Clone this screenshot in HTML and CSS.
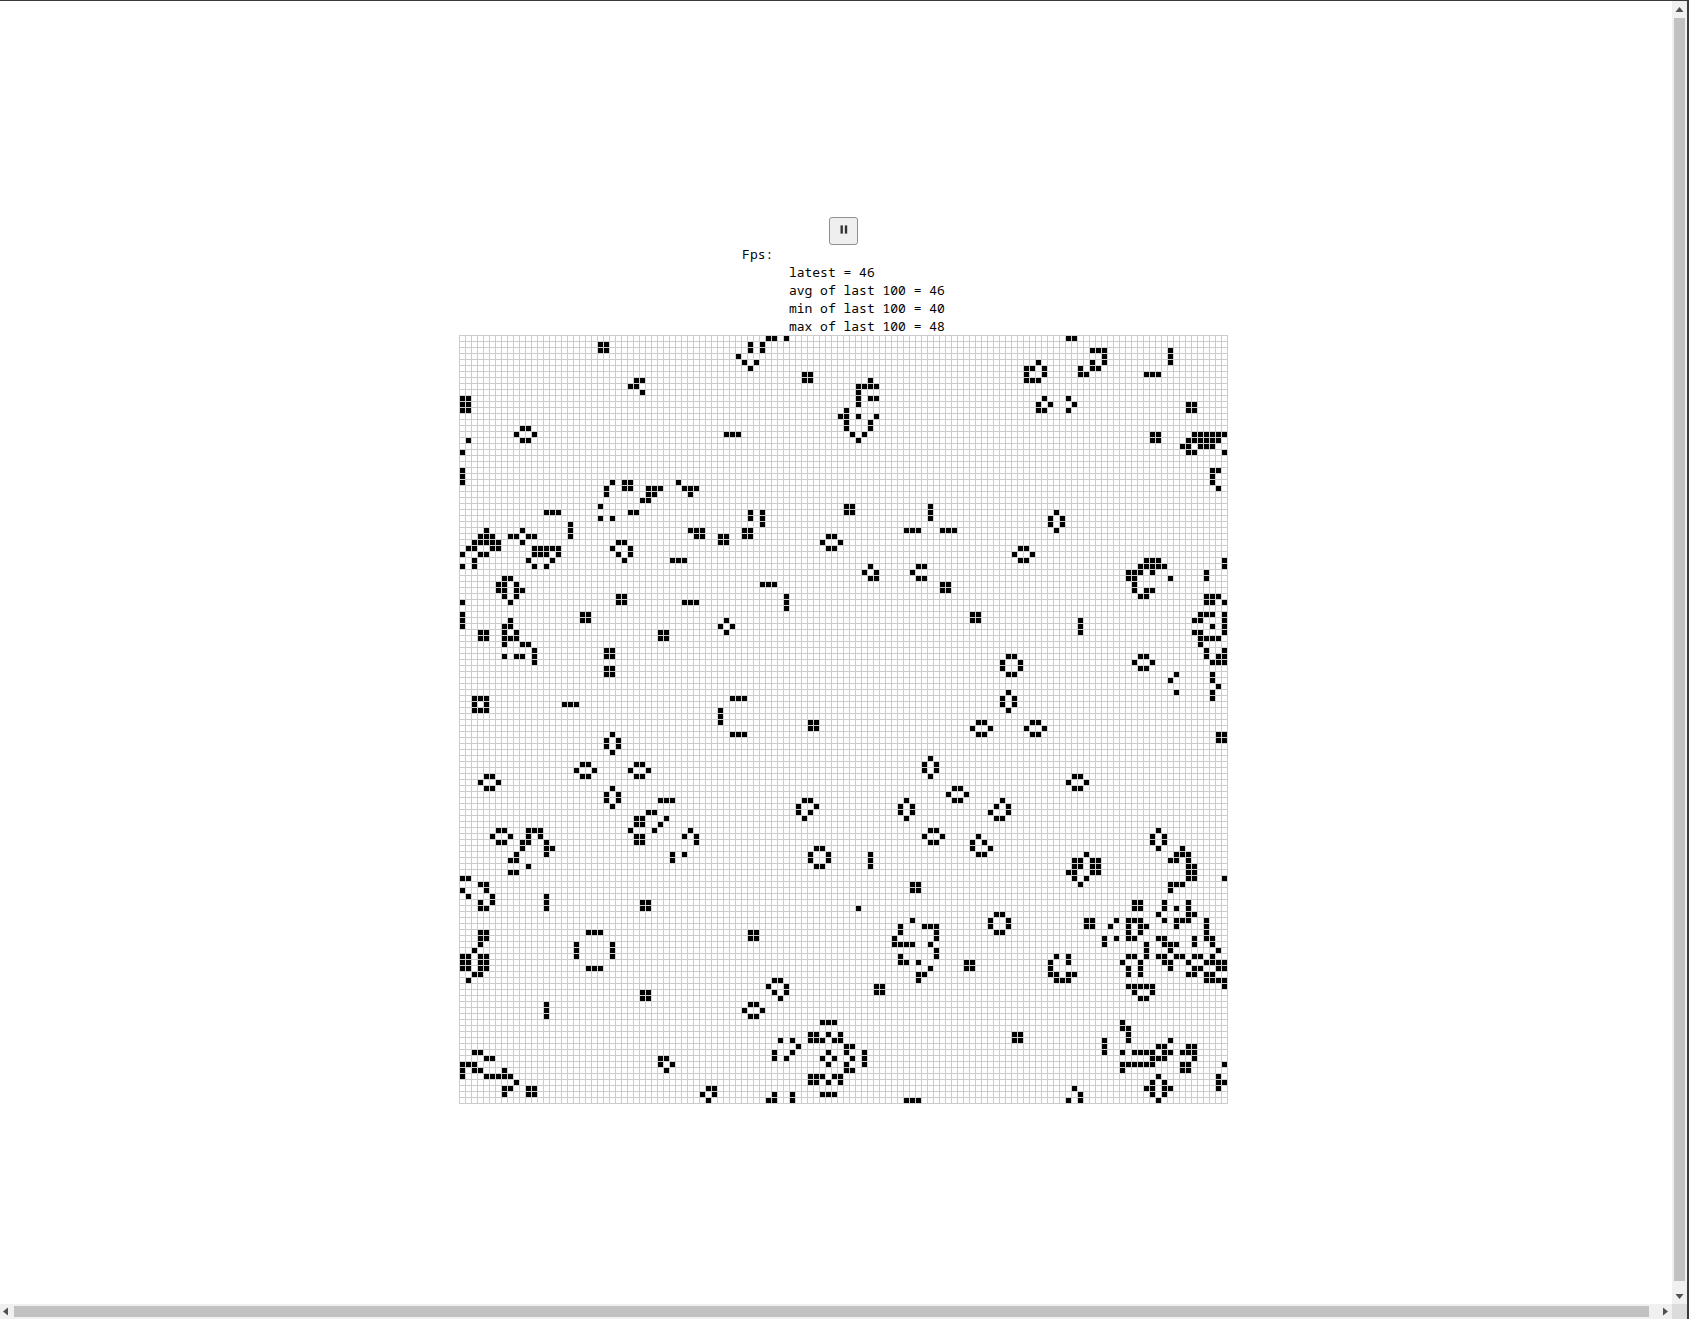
FILE: index.html
```html
<!DOCTYPE html>
<html lang="en">
<head>
    <meta charset="UTF-8">
    <title>Game of Life</title>
    <link rel="stylesheet" href="styles.css">
</head>
<body>
    <div class="page">
        <button class="play-pause" id="playPause" aria-label="pause">
            <svg width="8" height="9" viewBox="0 0 8 9"><rect x="0.5" y="0.4" width="2.4" height="8.2"/><rect x="4.8" y="0.4" width="2.4" height="8.2"/></svg>
        </button>
        <div class="fps" id="fps">Fps:
      latest = 46
      avg of last 100 = 46
      min of last 100 = 40
      max of last 100 = 48</div>
        <canvas class="life" id="lifeCanvas" width="769" height="769"></canvas>
    </div>

    <!-- Window scrollbars -->
    <div class="scrollbar-v">
        <svg class="arrow" width="15" height="17" viewBox="0 0 15 17"><polygon points="7.5,6 11.5,11 3.5,11"/></svg>
        <div class="thumb-v"></div>
        <svg class="arrow" width="15" height="23" viewBox="0 0 15 23"><polygon points="3.5,13 11.5,13 7.5,18"/></svg>
    </div>
    <div class="scrollbar-h">
        <svg class="arrow" width="14" height="15" viewBox="0 0 14 15"><polygon points="8,3.5 8,11.5 3,7.5"/></svg>
        <div class="thumb-h"></div>
        <svg class="arrow" width="23" height="15" viewBox="0 0 23 15"><polygon points="14,3.5 19,7.5 14,11.5"/></svg>
    </div>
    <div class="scroll-corner"></div>

    <script src="script.js"></script>
</body>
</html>
```

FILE: styles.css
```css
html, body { margin: 0; height: 100%; overflow: hidden; background: #fff; }
body { border-top: 1px solid #3a3a3a; box-sizing: border-box; }

.page { width: 1687px; display: flex; flex-direction: column; align-items: center; padding-top: 216px; }

.play-pause { display: flex; align-items: center; justify-content: center; width: 29px; height: 28px; padding: 0 0 4px; box-sizing: border-box; background: #efefef; border: 1px solid #8f8f8f; border-radius: 3px; }
.play-pause svg { display: block; fill: #333; }
.fps { height: 90px; white-space: pre; font-family: "Noto Sans Mono", "DejaVu Sans Mono", monospace; font-size: 13px; line-height: 18px; color: #000; }
.life { display: block; }

.scrollbar-v { position: absolute; top: 1px; right: 2px; width: 15px; height: 1303px; display: flex; flex-direction: column; background: #f0f0f0; }
.thumb-v { flex: 1; width: 11px; margin-left: 2px; background: #c1c1c1; }

.scrollbar-h { position: absolute; left: 0; bottom: 0; width: 1672px; height: 15px; display: flex; align-items: center; background: #f0f0f0; }
.thumb-h { flex: 1; height: 11px; background: #c1c1c1; }

.scroll-corner { position: absolute; right: 2px; bottom: 0; width: 15px; height: 15px; background: #dcdcdc; }
.arrow { display: block; flex: none; fill: #505050; }

body::after { content: ""; position: absolute; top: 0; right: 0; bottom: 0; width: 2px; background: #3a3a3a; }
```

FILE: script.js
```js
const CELL_SIZE = 5;
const GRID_COLOR = "#CCCCCC";
const UNIVERSE_SIZE = 128;

// live cells, row number -> columns
const liveCells = {
    0: [51,52,54,101,102],
    1: [23,24,48,50],
    2: [23,24,48,50,105,106,107,118],
    3: [46,107,118],
    4: [47,49,96,105,107,118],
    5: [48,94,95,97,103,105,106],
    6: [57,58,94,97,103,104,114,115,116],
    7: [29,30,57,58,68,94,95,96],
    8: [28,29,66,67,68,69],
    9: [30,66],
    10: [0,1,66,68,69,97,101],
    11: [0,1,66,96,98,102,121,122],
    12: [0,1,64,96,97,101,121,122],
    13: [63,64,66,69],
    14: [64,68],
    15: [10,11,64,68],
    16: [9,12,44,45,46,65,67,115,116,122,123,124,125,126,127],
    17: [1,10,11,66,115,116,121,122,123,124,125,126],
    18: [120,121,123,124,125],
    19: [0,121,122,127],
    22: [0,125,126],
    23: [0,125],
    24: [0,25,27,28,36,125],
    25: [24,27,28,31,32,33,37,38,39,126],
    26: [24,31,32,38],
    27: [30,31],
    28: [23,64,65,78],
    29: [14,15,16,28,29,48,50,64,65,78,99],
    30: [23,25,48,50,78,98,100],
    31: [18,50,98,100],
    32: [4,10,18,38,39,40,47,48,74,75,76,80,81,82,99],
    33: [3,4,5,8,9,11,12,18,39,40,43,44,47,48,61,62],
    34: [2,3,4,5,6,10,26,27,43,44,60,63],
    35: [1,2,5,6,12,13,14,15,16,25,28,61,62,93,94],
    36: [0,3,4,12,13,14,16,26,28,92,95],
    37: [2,11,15,27,35,36,37,93,94,114,115,116,127],
    38: [0,2,12,14,68,76,77,113,114,115,116,117,127],
    39: [67,69,75,111,112,113,115,124],
    40: [7,8,68,69,76,77,111,112,118,124],
    41: [6,7,9,50,51,52,80,81,112],
    42: [6,7,9,10,80,81,112,114,115],
    43: [7,9,26,27,54,113,114,124,125,126],
    44: [0,8,26,27,37,38,39,54,124,125,127],
    45: [54],
    46: [0,20,21,85,86,123,124,125,127],
    47: [0,8,20,21,44,85,86,103,122,123,127],
    48: [0,7,8,43,45,103,125,127],
    49: [3,4,7,9,33,34,44,103,122,123,127],
    50: [3,4,7,8,9,33,34,123,124,125,126],
    51: [7,10,11,123],
    52: [12,24,25,124,127],
    53: [7,9,10,12,24,25,91,92,113,114,124,126,127],
    54: [12,90,93,112,115,125,126,127],
    55: [24,25,90,93,113,114],
    56: [24,25,91,92,119,125],
    57: [118,125],
    58: [126],
    59: [91,119,125],
    60: [2,3,4,45,46,47,90,92,125],
    61: [2,4,17,18,19,90,92],
    62: [2,3,4,43,91],
    63: [43],
    64: [43,58,59,86,87,95,96],
    65: [58,59,85,88,94,97],
    66: [25,45,46,47,86,87,95,96,126,127],
    67: [24,26,126,127],
    68: [24,26],
    69: [25],
    70: [78],
    71: [20,21,29,30,77,79],
    72: [19,22,28,31,77,79],
    73: [4,5,20,21,29,30,78,102,103],
    74: [3,6,101,104],
    75: [4,5,25,82,83,102,103],
    76: [24,26,81,84],
    77: [24,26,33,34,35,57,58,74,82,83,90],
    78: [25,56,59,73,75,89,91],
    79: [31,32,56,58,73,75,88,91],
    80: [29,30,34,57,74,89,90],
    81: [29,30,33],
    82: [6,7,11,12,13,28,32,38,78,79,116],
    83: [5,8,11,13,29,30,37,39,77,80,86,115,117],
    84: [6,7,10,11,14,29,30,39,78,79,85,87,115,117],
    85: [10,14,15,59,60,85,88,116,120],
    86: [9,14,35,37,58,61,68,86,87,104,119,120,121],
    87: [8,9,35,58,61,68,102,103,105,106,118,119,121],
    88: [11,59,60,68,102,103,105,106,121,122],
    89: [8,9,101,102,105,106,121,122],
    90: [0,1,102,104,121,122,127],
    91: [3,4,75,76,103,118,119,120],
    92: [0,4,75,76,118],
    93: [1,5,14],
    94: [3,5,14,30,31,112,113,117,121],
    95: [3,4,14,30,31,66,112,113,117,119,121],
    96: [116,121,122,89,90],
    97: [75,88,91,104,105,109,111,112,113,117,119,120,121,124],
    98: [73,77,78,79,88,91,104,105,108,111,113,114,119,124],
    99: [3,4,21,22,23,48,49,73,79,89,90,111,113,124],
    100: [3,4,48,49,72,79,107,109,111,112,116,117,122,124,125],
    101: [3,19,25,72,73,74,75,78,107,114,117,118,119,122,125],
    102: [2,19,25,79,114,118,126],
    103: [0,1,3,4,19,25,73,79,99,101,111,112,114,116,117,119,120,122,123,125],
    104: [0,1,3,4,73,74,76,84,85,98,101,110,113,117,118,121,124,125,126,127],
    105: [0,1,3,4,21,22,23,78,84,85,98,111,113,118,122,123,126,127],
    106: [2,3,76,77,98,99,101,102,111,113,121,122,124,125],
    107: [1,52,53,76,99,100,101,124,125,126,127],
    108: [51,54,69,70,111,112,113,114,115,127],
    109: [30,31,52,54,69,70,112,115],
    110: [30,31,53,113,114],
    111: [14,48,49],
    112: [14,47,50],
    113: [14,48,49],
    114: [60,61,62,110],
    115: [110,111],
    116: [58,59,61,63,92,93,111],
    117: [53,55,58,59,60,62,63,92,93,107,111,118],
    118: [56,64,65,107,116,117,121,122],
    119: [2,3,52,55,61,64,67,107,110,112,113,114,115,117,118,120,121,122],
    120: [4,5,33,34,52,54,60,62,65,67,115,116,117,122],
    121: [0,1,2,33,35,61,64,67,110,111,112,113,114,115,120,121,127],
    122: [0,2,3,7,34,64,65,110,120,121],
    123: [0,4,5,6,7,8,58,59,60,62,63,116,126],
    124: [9,58,59,61,63,115,117,126,127],
    125: [7,8,11,12,41,42,102,114,115,117,118,126],
    126: [7,11,12,40,42,52,55,60,61,62,103,115,117],
    127: [41,51,52,55,74,75,76,101,103,116]
};

function drawGrid(ctx) {
    ctx.beginPath();
    ctx.strokeStyle = GRID_COLOR;
    ctx.lineWidth = 1;

    for (let i = 0; i <= UNIVERSE_SIZE; i++) {
        let pos = i * (CELL_SIZE + 1) + 0.5;
        ctx.moveTo(pos, 0);
        ctx.lineTo(pos, 769);
        ctx.moveTo(0, pos);
        ctx.lineTo(769, pos);
    }
    ctx.stroke();
}

function drawCells(ctx) {
    ctx.fillStyle = "#000000";
    for (let row in liveCells) {
        for (let col of liveCells[row]) {
            ctx.fillRect(col * (CELL_SIZE + 1) + 1, row * (CELL_SIZE + 1) + 1, CELL_SIZE, CELL_SIZE);
        }
    }
}

let ctx = document.getElementById("lifeCanvas").getContext("2d");
drawGrid(ctx);
drawCells(ctx);
```
